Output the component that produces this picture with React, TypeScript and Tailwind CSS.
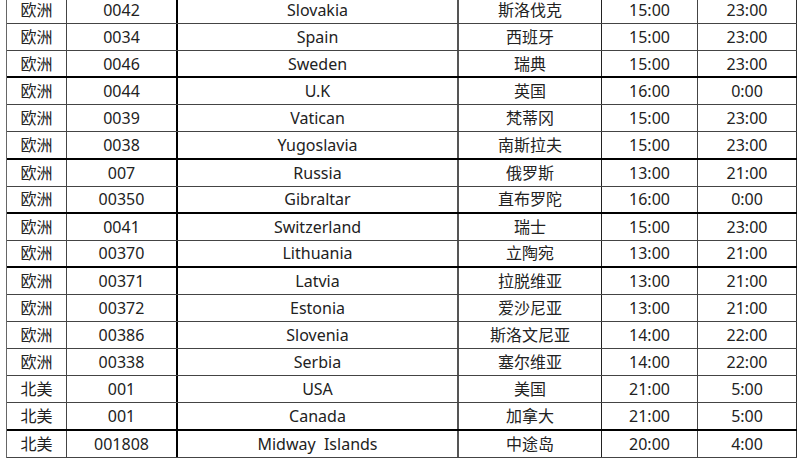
const rows: [string, string, string, string, string, string][] = [
  ['欧洲', '0042', 'Slovakia', '斯洛伐克', '15:00', '23:00'],
  ['欧洲', '0034', 'Spain', '西班牙', '15:00', '23:00'],
  ['欧洲', '0046', 'Sweden', '瑞典', '15:00', '23:00'],
  ['欧洲', '0044', 'U.K', '英国', '16:00', '0:00'],
  ['欧洲', '0039', 'Vatican', '梵蒂冈', '15:00', '23:00'],
  ['欧洲', '0038', 'Yugoslavia', '南斯拉夫', '15:00', '23:00'],
  ['欧洲', '007', 'Russia', '俄罗斯', '13:00', '21:00'],
  ['欧洲', '00350', 'Gibraltar', '直布罗陀', '16:00', '0:00'],
  ['欧洲', '0041', 'Switzerland', '瑞士', '15:00', '23:00'],
  ['欧洲', '00370', 'Lithuania', '立陶宛', '13:00', '21:00'],
  ['欧洲', '00371', 'Latvia', '拉脱维亚', '13:00', '21:00'],
  ['欧洲', '00372', 'Estonia', '爱沙尼亚', '13:00', '21:00'],
  ['欧洲', '00386', 'Slovenia', '斯洛文尼亚', '14:00', '22:00'],
  ['欧洲', '00338', 'Serbia', '塞尔维亚', '14:00', '22:00'],
  ['北美', '001', 'USA', '美国', '21:00', '5:00'],
  ['北美', '001', 'Canada', '加拿大', '21:00', '5:00'],
  ['北美', '001808', 'Midway  Islands', '中途岛', '20:00', '4:00'],
];

// rows whose bottom line is drawn heavier in the sheet
const heavy = new Set([2, 5, 7, 9, 15]);

export default function App() {
  return (
    <div
      className="w-[798px] h-[463px] overflow-hidden bg-white text-[16px] text-[#222]"
      style={{ fontFamily: '"Noto Sans", "Noto Sans CJK SC", sans-serif' }}
    >
      <div className="-mt-[3px] ml-[6px] w-[791px] border-l border-[#666]">
        {rows.map((r, i) => (
          <div
            key={i}
            className={`flex h-[27.1px] box-border ${heavy.has(i) ? 'border-b-2 border-black' : 'border-b border-[#444]'}`}
          >
            <div className="w-[60px] flex items-center justify-center border-r border-[#444]">{r[0]}</div>
            <div className="w-[111px] flex items-center justify-center border-r-2 border-black">{r[1]}</div>
            <div className="w-[281px] flex items-center justify-center border-r-2 border-[#555] whitespace-pre">{r[2]}</div>
            <div className="w-[143px] flex items-center justify-center border-r border-[#222]">{r[3]}</div>
            <div className="w-[96px] flex items-center justify-center border-r border-[#444]">{r[4]}</div>
            <div className="w-[99px] flex items-center justify-center border-r border-[#333]">{r[5]}</div>
          </div>
        ))}
      </div>
    </div>
  );
}
